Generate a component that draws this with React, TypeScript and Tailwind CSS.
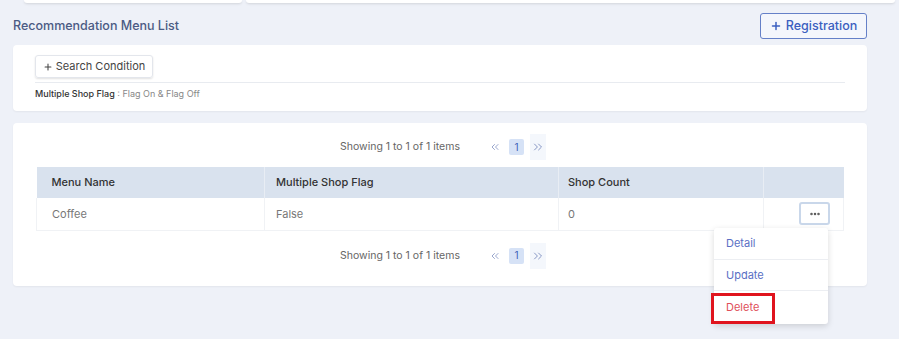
import { Plus, ChevronsLeft, ChevronsRight, MoreHorizontal } from "lucide-react"

const font = { fontFamily: "Inter, 'Noto Sans', sans-serif" }

function Pager() {
  return (
    <div className="flex items-center justify-center pl-[6px] h-[26px] text-[10.5px] text-[#666]">
      <span className="mr-[29px]">Showing 1 to 1 of 1 items</span>
      <span className="w-[12px] flex justify-center text-[#7f8fc0]">
        <ChevronsLeft className="w-[14px] h-[14px]" strokeWidth={1.6} />
      </span>
      <span className="ml-[8px] mr-[6px] w-[15px] h-[16px] rounded-[2px] bg-[#d6e2f6] text-[#3d5fb8] flex items-center justify-center text-[10px]">
        1
      </span>
      <span className="w-[16px] h-[26px] flex items-center justify-center bg-[#f4f7fc] text-[#7f8fc0]">
        <ChevronsRight className="w-[14px] h-[14px]" strokeWidth={1.6} />
      </span>
    </div>
  )
}

export default function App() {
  return (
    <div className="w-[899px] h-[339px] bg-[#eef1f8] relative overflow-hidden" style={font}>
      {/* top tab edges */}
      <div className="flex h-[3px] gap-[4px] pl-[24px] pr-[4px]">
        <div className="w-[218px] bg-white rounded-b-[3px] shadow-sm" />
        <div className="flex-1 bg-white rounded-b-[3px] shadow-sm" />
      </div>

      <div className="px-[13px] w-[880px]">
        <div className="flex items-center justify-between mt-[10px] h-[26px]">
          <h1 className="text-[12.5px] text-[#4b5b84] font-medium">Recommendation Menu List</h1>
          <button className="h-[26px] w-[107px] border border-[#6580c8] rounded-[3px] bg-[#f4f6fc] text-[#3b5fc0] text-[12.5px] font-medium flex items-center justify-center gap-[4px]">
            <Plus className="w-[12px] h-[12px]" strokeWidth={3} />
            Registration
          </button>
        </div>

        {/* search card */}
        <div className="mt-[6px] bg-white rounded-[4px] h-[66px] px-[22px] pt-[10px] shadow-[0_1px_2px_rgba(0,0,0,0.05)]">
          <button className="h-[23px] w-[118px] border border-[#e3e6ec] rounded-[3px] shadow-[0_1px_2px_rgba(0,0,0,0.12)] text-[11px] text-[#444] flex items-center justify-center gap-[3px]">
            <Plus className="w-[10px] h-[10px]" strokeWidth={2.5} />
            Search Condition
          </button>
          <div className="h-px bg-[#e8ebf0] mt-[4px]" />
          <div className="mt-[4px] text-[9px] text-[#888]">
            <span className="text-[#333] font-medium">Multiple Shop Flag</span> : Flag On &amp; Flag Off
          </div>
        </div>

        {/* list card */}
        <div className="mt-[12px] bg-white rounded-[4px] h-[163px] px-[23px] pt-[11px] shadow-[0_1px_2px_rgba(0,0,0,0.05)]">
          <Pager />
          <table className="mt-[7px] w-[808px] border-collapse text-[11px]">
            <thead>
              <tr className="bg-[#d9e2ee] h-[31px] text-left text-[#333]">
                <th className="w-[228px] pl-[15px] font-medium">Menu Name</th>
                <th className="w-[294px] pl-[11px] font-medium border-l border-[#e8edf4]">Multiple Shop Flag</th>
                <th className="w-[205px] pl-[9px] font-medium border-l border-[#e8edf4]">Shop Count</th>
                <th className="border-l border-[#e8edf4]" />
              </tr>
            </thead>
            <tbody>
              <tr className="h-[32px] text-[#777] border-b border-[#f0f2f5]">
                <td className="pl-[15px] border-l border-[#f0f2f5]">Coffee</td>
                <td className="pl-[11px] border-l border-[#f0f2f5]">False</td>
                <td className="pl-[9px] border-l border-[#f0f2f5]">0</td>
                <td className="border-l border-r border-[#f0f2f5]">
                  <div className="flex justify-end pr-[13px]">
                    <button className="w-[31px] h-[23px] border-2 border-[#c9d7ea] rounded-[3px] flex items-center justify-center text-[#555]">
                      <MoreHorizontal className="w-[12px] h-[12px]" strokeWidth={3} />
                    </button>
                  </div>
                </td>
              </tr>
            </tbody>
          </table>
          <div className="mt-[12px]">
            <Pager />
          </div>
        </div>
      </div>

      {/* dropdown menu */}
      <div className="absolute left-[714px] top-[228px] w-[114px] bg-white rounded-[3px] shadow-[0_2px_6px_rgba(0,0,0,0.15)] text-[11px]">
        <div className="h-[32px] flex items-center pl-[12px] text-[#5a6fc4] border-b border-[#eceef2]">Detail</div>
        <div className="h-[31px] flex items-center pl-[12px] text-[#5a6fc4] border-b border-[#eceef2]">Update</div>
        <div className="h-[33px] flex items-center pl-[12px] text-[#e0505a]">Delete</div>
      </div>
      <div className="absolute left-[711px] top-[293px] w-[64px] h-[31px] border-[3px] border-[#e0141e]" />
    </div>
  )
}
